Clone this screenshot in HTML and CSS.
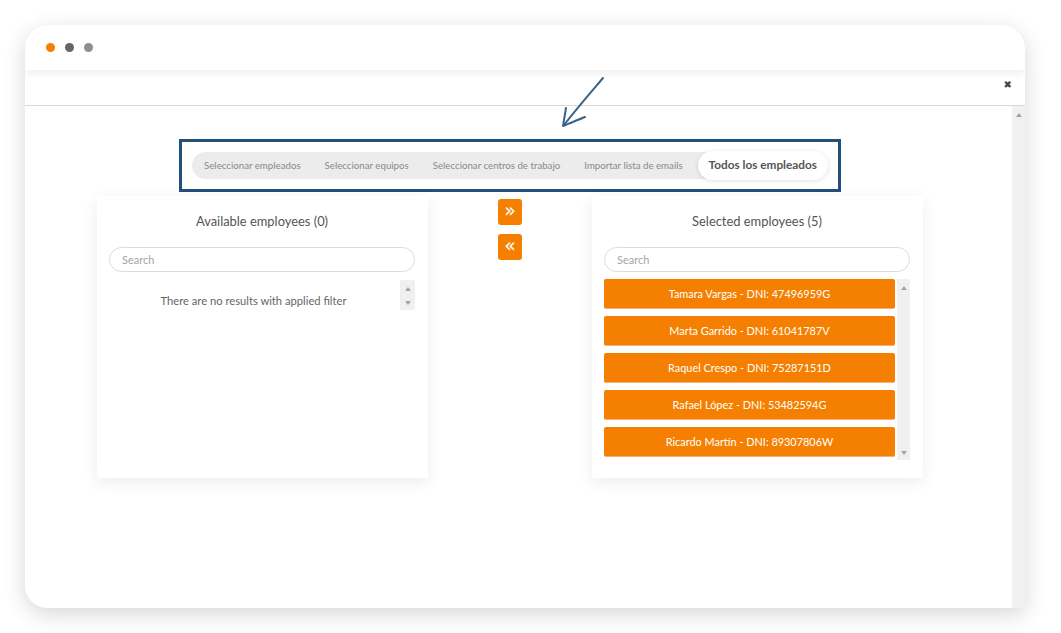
FILE: index.html
```html
<!DOCTYPE html>
<html>
<head>
<meta charset="utf-8">
<link rel="stylesheet" href="styles.css">
</head>
<body>
<div class="window">
  <div class="titlebar">
    <span class="dot dot-orange"></span>
    <span class="dot dot-dark"></span>
    <span class="dot dot-gray"></span>
  </div>
  <div class="toolbar"><span class="close">&#x2716;</span></div>
  <div class="content">
    <div class="main">
      <div class="tabs-frame">
        <div class="tabs">
          <span class="tab">Seleccionar empleados</span>
          <span class="tab">Seleccionar equipos</span>
          <span class="tab">Seleccionar centros de trabajo</span>
          <span class="tab">Importar lista de emails</span>
          <span class="tab tab-active">Todos los empleados</span>
        </div>
      </div>
      <div class="columns">
        <section class="panel">
          <h2 class="panel-title">Available employees (0)</h2>
          <div class="search">Search</div>
          <div class="list">
            <div class="list-body empty">There are no results with applied filter</div>
            <div class="mini-scroll short"><span class="tri-up"></span><span class="tri-down"></span></div>
          </div>
        </section>
        <div class="movers">
          <button class="move">&raquo;</button>
          <button class="move">&laquo;</button>
        </div>
        <section class="panel">
          <h2 class="panel-title">Selected employees (5)</h2>
          <div class="search">Search</div>
          <div class="list">
            <div class="list-body items">
              <div class="item">Tamara Vargas - DNI: 47496959G</div>
              <div class="item">Marta Garrido - DNI: 61041787V</div>
              <div class="item">Raquel Crespo - DNI: 75287151D</div>
              <div class="item">Rafael López - DNI: 53482594G</div>
              <div class="item">Ricardo Martín - DNI: 89307806W</div>
            </div>
            <div class="mini-scroll tall"><span class="tri-up"></span><span class="tri-down"></span></div>
          </div>
        </section>
      </div>
    </div>
    <div class="vscroll"><span class="tri-up"></span></div>
  </div>
  <svg class="arrow" width="120" height="80" viewBox="0 0 120 80">
    <path d="M73 18 C62 31 48 47 34 65" fill="none" stroke="#3b628b" stroke-width="2" stroke-linecap="round"/>
    <path d="M36 48 C35 54 34 60 33 66 C40 63 48 60 55 57" fill="none" stroke="#3b628b" stroke-width="2" stroke-linecap="round" stroke-linejoin="round"/>
  </svg>
</div>
</body>
</html>
```
FILE: styles.css
```css
* { box-sizing: border-box; }
html, body { margin: 0; padding: 0; background: #ffffff; }
body {
  font-family: Lato, "Open Sans", sans-serif;
  width: 1061px;
  height: 633px;
  overflow: hidden;
  padding: 25px 0 0 25px;
}
.window {
  position: relative;
  width: 1000px;
  height: 583px;
  background: #fff;
  border-radius: 24px 24px 0 22px;
  box-shadow: 0 6px 22px rgba(0,0,0,0.16);
  display: flex;
  flex-direction: column;
  overflow: hidden;
}
.titlebar {
  height: 45px;
  flex: none;
  display: flex;
  align-items: center;
  gap: 10px;
  padding-left: 21px;
  background: #fff;
  position: relative;
  z-index: 2;
  box-shadow: 0 3px 8px rgba(0,0,0,0.07);
}
.dot { width: 9px; height: 9px; border-radius: 50%; display: block; }
.dot-orange { background: #f57f00; }
.dot-dark { background: #666; }
.dot-gray { background: #8e8e8e; }
.toolbar {
  height: 36px;
  flex: none;
  border-bottom: 1px solid #d9d9d9;
  display: flex;
  align-items: center;
  justify-content: flex-end;
  padding-right: 13px;
  padding-bottom: 6px;
}
.close { font-size: 10px; color: #444; font-family: "DejaVu Sans", sans-serif; }
.content {
  flex: 1;
  display: flex;
  min-height: 0;
}
.main {
  flex: 1;
  padding-top: 33px;
}
.vscroll {
  width: 13px;
  background: #f1f1f1;
  display: flex;
  justify-content: center;
  padding-top: 7px;
}
.tri-up, .tri-down {
  display: block;
  width: 0; height: 0;
  border-left: 3.5px solid transparent;
  border-right: 3.5px solid transparent;
}
.tri-up { border-bottom: 4px solid #a3a3a3; }
.tri-down { border-top: 4px solid #a3a3a3; }
.tabs-frame {
  margin-left: 154px;
  width: 662px;
  height: 53px;
  border: 3px solid #22507b;
  padding: 10px;
}
.tabs {
  height: 27px;
  background: #ececec;
  border-radius: 14px;
  display: flex;
  align-items: center;
}
.tab {
  font-size: 9.7px;
  color: #8a8a8a;
  padding: 0 12px 1px;
  white-space: nowrap;
}
.tab-active {
  margin-left: auto;
  background: #fff;
  height: 29px;
  border-radius: 15px;
  display: flex;
  align-items: center;
  padding: 0 11px 2px;
  font-weight: 700;
  font-size: 11.8px;
  color: #555;
  box-shadow: 0 1px 5px rgba(0,0,0,0.12);
}
.columns {
  display: flex;
  align-items: flex-start;
  margin-left: 72px;
  margin-top: 4px;
  gap: 70px;
}
.panel {
  width: 331px;
  height: 282px;
  background: #fff;
  box-shadow: 0 4px 16px rgba(0,0,0,0.08);
  padding: 17px 13px 0 12px;
  border-radius: 2px;
}
.panel-title {
  margin: 0;
  font-weight: 400;
  font-size: 12.9px;
  color: #555;
  text-align: center;
  line-height: 16px;
}
.search {
  margin-top: 18px;
  height: 25px;
  border: 1px solid #dcdcdc;
  border-radius: 13px;
  font-size: 11px;
  color: #a5a5a5;
  padding-left: 12px;
  display: flex;
  align-items: center;
}
.list {
  margin-top: 7px;
  display: flex;
  gap: 2px;
}
.list-body { flex: 1; }
.empty {
  font-size: 11.2px;
  color: #666;
  text-align: center;
  padding-top: 15px;
}
.mini-scroll {
  width: 15px;
  background: #f0f0f0;
  display: flex;
  flex-direction: column;
  align-items: center;
  justify-content: space-between;
  padding: 7px 0 5px;
}
.mini-scroll.short { height: 30px; margin-top: 1px; }
.mini-scroll.tall { width: 13px; height: 181px; }
.items { display: flex; flex-direction: column; gap: 7px; }
.item {
  height: 30px;
  background: #f57f00;
  border-radius: 2px;
  border-bottom: 1px solid #f8b270;
  color: #fff;
  font-size: 10.9px;
  display: flex;
  align-items: center;
  justify-content: center;
}
.movers {
  display: flex;
  flex-direction: column;
  gap: 9px;
  padding-top: 3px;
}
.move {
  width: 24px;
  height: 26px;
  border: 0;
  border-radius: 3px;
  background: #f57f00;
  color: #fff;
  font-size: 19px;
  line-height: 1;
  padding: 0 0 3px;
  font-family: "DejaVu Sans", sans-serif;
  font-weight: 400;
}
.arrow {
  position: absolute;
  left: 505px;
  top: 35px;
  z-index: 3;
}
```
